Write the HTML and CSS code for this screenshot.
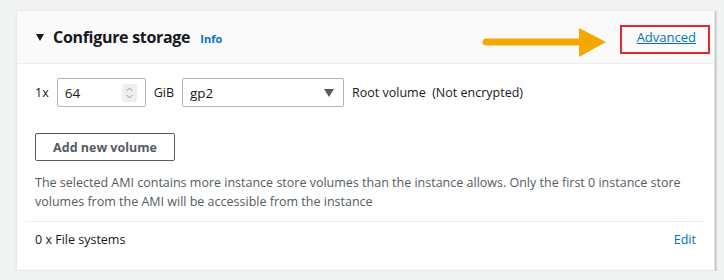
FILE: index.html
```html
<!DOCTYPE html>
<html lang="en">
<head>
    <meta charset="UTF-8">
    <title>Configure storage</title>
    <link rel="stylesheet" href="styles.css">
</head>
<body>
    <div class="panel">
        <div class="panel-header">
            <span class="caret"></span>
            <h2 class="panel-title">Configure storage</h2>
            <a class="info-link" href="#">Info</a>
            <div class="spacer"></div>
            <svg class="pointer" width="126" height="30" viewBox="0 0 126 30">
                <line x1="4" y1="14" x2="100" y2="14" stroke="#f5a800" stroke-width="7" stroke-linecap="round"/>
                <polygon points="97,0 124,14 97,29" fill="#f5a800"/>
            </svg>
            <div class="highlight">
                <a class="advanced-link" href="#">Advanced</a>
            </div>
        </div>

        <div class="panel-body">
            <div class="volume-row">
                <span class="label">1x</span>
                <div class="size-input">
                    <span>64</span>
                    <span class="spinner">
                        <svg width="9" height="14" viewBox="0 0 9 14">
                            <polyline points="1.5,5 4.5,2 7.5,5" fill="none" stroke="#8d969e" stroke-width="1"/>
                            <polyline points="1.5,9 4.5,12 7.5,9" fill="none" stroke="#8d969e" stroke-width="1"/>
                        </svg>
                    </span>
                </div>
                <span class="label">GiB</span>
                <div class="type-select">
                    <span>gp2</span>
                    <span class="select-caret"></span>
                </div>
                <span class="label">Root volume&nbsp; (Not encrypted)</span>
            </div>

            <button class="btn">Add new volume</button>

            <p class="note">The selected AMI contains more instance store volumes than the instance allows. Only the first 0 instance store volumes from the AMI will be accessible from the instance</p>
        </div>

        <div class="panel-footer">
            <span>0 x File systems</span>
            <a class="edit-link" href="#">Edit</a>
        </div>
    </div>
</body>
</html>
```

FILE: styles.css
```css
* {
    box-sizing: border-box;
    margin: 0;
    padding: 0;
}

body {
    font-family: 'Open Sans', 'Noto Sans', sans-serif;
    font-size: 12.5px;
    color: #16191f;
    background-color: #f2f3f3;
    padding: 10px 9px 0 16px;
}

.panel {
    width: 699px;
    background: white;
    border: 1px solid #e7eaea;
    box-shadow: 1px 1px 2px rgba(0, 28, 36, 0.3);
}

.panel-header {
    display: flex;
    align-items: center;
    height: 53px;
    padding: 0 4px 0 19px;
    background-color: #fafafa;
    border-bottom: 1px solid #eaeded;
}

.caret {
    width: 0;
    height: 0;
    border-left: 4px solid transparent;
    border-right: 4px solid transparent;
    border-top: 7px solid #16191f;
    margin-right: 9px;
    margin-top: 1px;
}

.panel-title {
    font-size: 16px;
    font-weight: 700;
    letter-spacing: -0.3px;
}

.info-link {
    font-size: 11px;
    font-weight: 700;
    color: #0073bb;
    text-decoration: none;
    margin-left: 10px;
    margin-top: 3px;
}

.spacer {
    flex: 1;
}

.pointer {
    margin-right: 12px;
    margin-top: 12px;
}

.highlight {
    width: 90px;
    height: 29px;
    border: 2px solid #e3262f;
    display: flex;
    align-items: center;
    justify-content: flex-end;
    padding-right: 12px;
    margin-top: 5px;
}

.advanced-link {
    color: #0073bb;
    font-size: 13px;
    margin-top: -6px;
}

.panel-body {
    padding: 14px 18px 0;
}

.volume-row {
    display: flex;
    align-items: center;
    gap: 8px;
}

.size-input,
.type-select {
    display: flex;
    align-items: center;
    justify-content: space-between;
    height: 29px;
    border: 1px solid #aab7b8;
    border-radius: 2px;
    padding: 0 8px 0 7px;
    font-size: 13.5px;
}

.size-input {
    width: 89px;
}

.type-select {
    width: 162px;
    padding-right: 9px;
}

.spinner {
    display: flex;
    align-items: center;
    justify-content: center;
    width: 15px;
    height: 18px;
    background-color: #eef0f0;
    border-radius: 2px;
}

.select-caret {
    width: 0;
    height: 0;
    border-left: 5px solid transparent;
    border-right: 5px solid transparent;
    border-top: 8px solid #545b64;
}

.btn {
    display: block;
    margin-top: 26px;
    width: 140px;
    height: 28px;
    border: 1px solid #545b64;
    border-radius: 2px;
    background: white;
    color: #545b64;
    font-family: inherit;
    font-size: 12.5px;
    font-weight: 700;
}

.note {
    margin-top: 12px;
    color: #545b64;
    font-size: 12.5px;
    line-height: 19px;
    padding-bottom: 10px;
}

.panel-footer {
    display: flex;
    justify-content: space-between;
    align-items: flex-start;
    margin: 0 9px 0 8px;
    padding: 9px 9px 0 10px;
    height: 49px;
    border-top: 1px solid #eaeded;
    line-height: 18px;
}

.edit-link {
    color: #0073bb;
    text-decoration: none;
}
```
